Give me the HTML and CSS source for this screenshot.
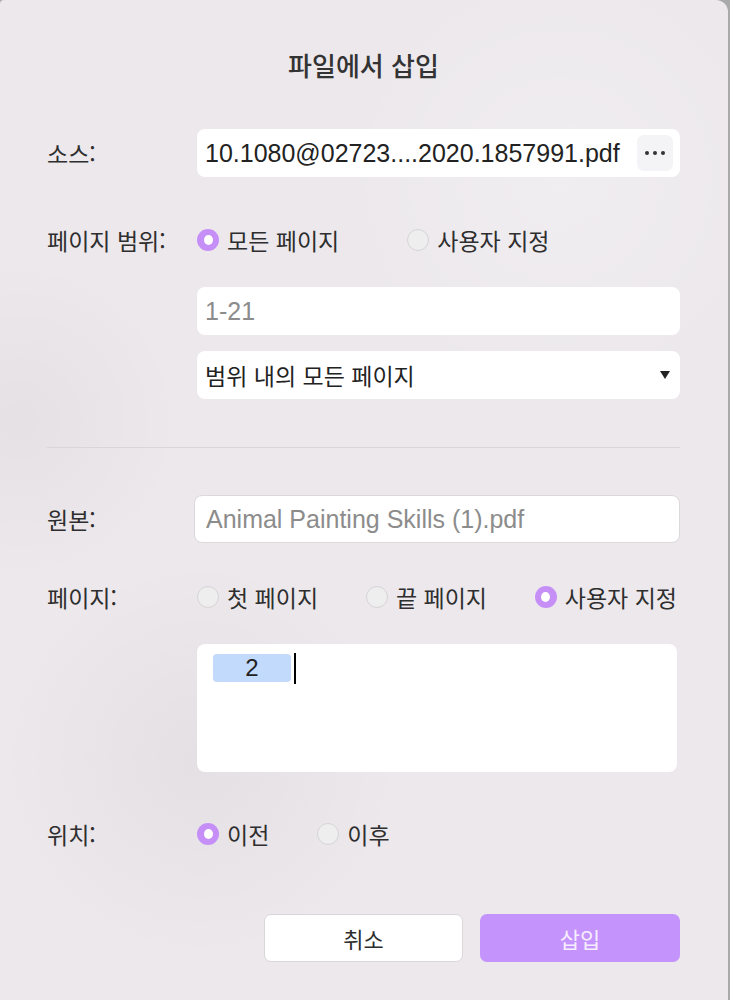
FILE: index.html
```html
<!DOCTYPE html>
<html lang="ko">
<head>
    <meta charset="UTF-8">
    <meta name="viewport" content="width=device-width, initial-scale=1.0">
    <title>파일에서 삽입</title>
    <link rel="stylesheet" href="styles.css">
</head>
<body>

    <div class="dialog">
        <h1 class="title">파일에서 삽입</h1>

        <!-- 소스 파일 -->
        <div class="row row-source">
            <div class="label">소스:</div>
            <div class="field field-source">
                <span class="latin">10.1080@02723....2020.1857991.pdf</span>
                <button class="more" type="button"><i></i><i></i><i></i></button>
            </div>
        </div>

        <!-- 페이지 범위 -->
        <div class="row row-range">
            <div class="label">페이지 범위:</div>
            <div class="options options-wide">
                <div class="option"><span class="radio checked"></span>모든 페이지</div>
                <div class="option"><span class="radio"></span>사용자 지정</div>
            </div>
        </div>

        <div class="indent field-gap-range">
            <div class="field"><span class="latin placeholder">1-21</span></div>
        </div>

        <div class="indent field-gap-select">
            <div class="field field-select">
                <span>범위 내의 모든 페이지</span>
                <span class="caret"></span>
            </div>
        </div>

        <div class="divider"></div>

        <!-- 원본 -->
        <div class="row row-original">
            <div class="label">원본:</div>
            <div class="field field-bordered"><span class="latin placeholder">Animal Painting Skills (1).pdf</span></div>
        </div>

        <!-- 페이지 -->
        <div class="row row-pages">
            <div class="label">페이지:</div>
            <div class="options options-spread">
                <div class="option"><span class="radio"></span>첫 페이지</div>
                <div class="option"><span class="radio"></span>끝 페이지</div>
                <div class="option"><span class="radio checked"></span>사용자 지정</div>
            </div>
        </div>

        <div class="indent area-gap">
            <div class="textarea">
                <span class="chip latin">2</span><span class="cursor"></span>
            </div>
        </div>

        <!-- 위치 -->
        <div class="row row-position">
            <div class="label">위치:</div>
            <div class="options">
                <div class="option"><span class="radio checked"></span>이전</div>
                <div class="option"><span class="radio"></span>이후</div>
            </div>
        </div>

        <div class="actions">
            <button class="btn btn-cancel" type="button">취소</button>
            <button class="btn btn-insert" type="button">삽입</button>
        </div>
    </div>

</body>
</html>
```

FILE: styles.css
```css
body {
    margin: 0;
    padding: 0;
    background: #a9a9a9;
    font-family: "Noto Sans CJK KR", sans-serif;
    font-size: 23px;
    color: #2e2e2e;
    overflow: hidden;
}

.dialog {
    width: 728px;
    height: 1000px;
    box-sizing: border-box;
    padding: 0 48px 0 47px;
    border-radius: 4px 12px 0 0;
    background-color: #ece8ec;
    background-image:
        radial-gradient(circle at 20px 420px, rgba(0, 0, 0, 0.03), transparent 160px),
        radial-gradient(circle at 200px 760px, rgba(0, 0, 0, 0.035), transparent 200px),
        radial-gradient(circle at 560px 180px, rgba(255, 255, 255, 0.25), transparent 220px);
}

.title {
    margin: 0;
    padding-top: 46px;
    line-height: 38px;
    font-size: 26px;
    font-weight: 500;
    text-align: center;
    color: #333;
}

.latin {
    font-family: "Liberation Sans", Arial, sans-serif;
    font-size: 25px;
}

.row {
    display: flex;
    align-items: center;
    height: 48px;
}

.label {
    width: 150px;
    flex-shrink: 0;
}

.indent {
    margin-left: 150px;
}

.row-source { margin-top: 45px; }
.row-range { margin-top: 39px; }
.field-gap-range { margin-top: 23px; }
.field-gap-select { margin-top: 16px; }
.row-original { margin-top: 47px; }
.row-pages { margin-top: 30px; }
.area-gap { margin-top: 23px; }
.row-position { margin-top: 38px; }

.field {
    flex: 1;
    height: 48px;
    box-sizing: border-box;
    display: flex;
    align-items: center;
    padding: 0 8px;
    background: #fff;
    border-radius: 8px;
    color: #222;
}

.field-source {
    justify-content: space-between;
    padding-right: 7px;
}

.placeholder {
    color: #8c8c8c;
}

.more {
    width: 36px;
    height: 36px;
    border: none;
    border-radius: 7px;
    background: #f4f3f5;
    display: flex;
    align-items: center;
    justify-content: center;
    gap: 4px;
    padding: 0;
}

.more i {
    width: 4px;
    height: 4px;
    border-radius: 50%;
    background: #333;
}

.field-select {
    justify-content: space-between;
    padding-right: 10px;
}

.caret {
    width: 0;
    height: 0;
    border-left: 5px solid transparent;
    border-right: 5px solid transparent;
    border-top: 8px solid #222;
}

.field-bordered {
    margin-left: -3px;
    padding-left: 11px;
    border: 1px solid #dcd9dc;
}

.divider {
    margin-top: 48px;
    height: 1px;
    background: #d9d5d9;
}

.options {
    display: flex;
    align-items: center;
    gap: 48px;
}

.options-wide {
    gap: 68px;
}

.options-spread {
    width: 480px;
    justify-content: space-between;
    gap: 0;
}

.option {
    display: flex;
    align-items: center;
    gap: 8px;
}

.radio {
    width: 22px;
    height: 22px;
    box-sizing: border-box;
    border-radius: 50%;
    background: #efeeef;
    border: 1px solid #d6d4d6;
}

.radio.checked {
    background: #c58ff7;
    border: none;
    display: flex;
    align-items: center;
    justify-content: center;
}

.radio.checked::after {
    content: "";
    width: 9px;
    height: 10px;
    border-radius: 50%;
    background: #fff;
}

.textarea {
    width: 480px;
    height: 128px;
    box-sizing: border-box;
    padding: 10px 16px;
    background: #fff;
    border-radius: 8px;
    display: flex;
    align-items: flex-start;
}

.chip {
    width: 78px;
    height: 28px;
    line-height: 28px;
    font-size: 24px;
    text-align: center;
    background: #c2dafc;
    border-radius: 4px;
    color: #222;
}

.cursor {
    width: 2px;
    height: 31px;
    margin-left: 3px;
    margin-top: -1px;
    background: #000;
}

.actions {
    margin-top: 56px;
    display: flex;
    justify-content: flex-end;
    gap: 17px;
}

.btn {
    width: 200px;
    height: 48px;
    border-radius: 7px;
    font-family: "Noto Sans CJK KR", sans-serif;
    font-size: 22px;
    cursor: pointer;
}

.btn-cancel {
    width: 199px;
    background: #fff;
    border: 1px solid #d9d7d9;
    color: #2e2e2e;
}

.btn-insert {
    background: #c593fc;
    border: none;
    color: #f6eeff;
}
```
